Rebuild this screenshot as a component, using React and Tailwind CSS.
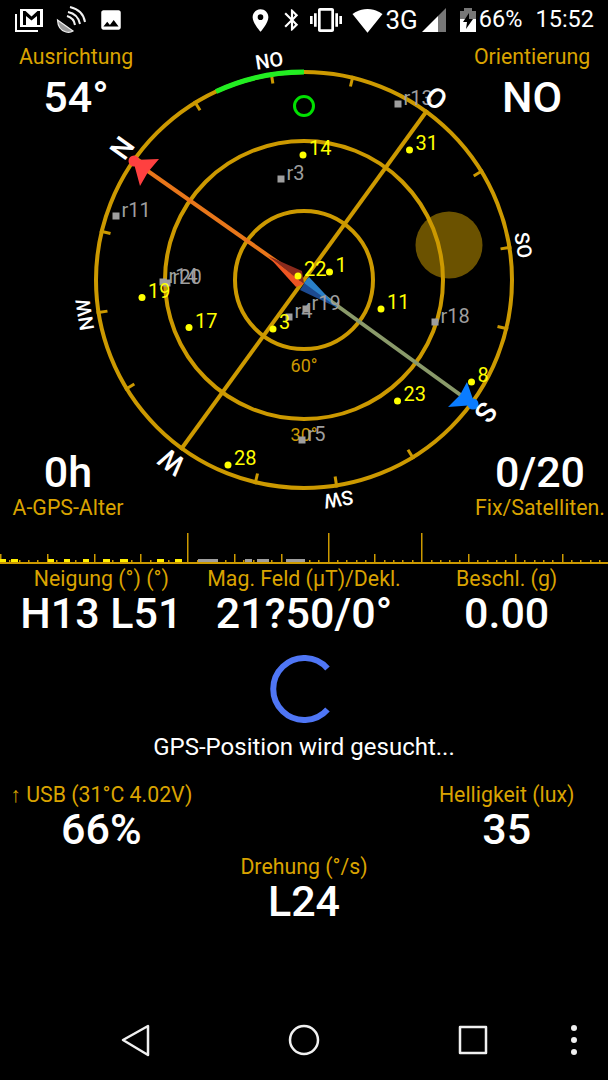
import React from 'react';
import { MdLocationOn, MdBluetooth, MdVibration, MdImage, MdSignalWifi4Bar } from 'react-icons/md';

const CX = 304;
const CY = 280;
const GOLD = '#cc9900';

const directions = [
  ['N', -54], ['NO', -9], ['O', 36], ['SO', 81],
  ['S', 126], ['SW', 171], ['W', 216], ['NW', 261],
];

// sichtbare Satelliten: [x, y, nummer]
const sats = [
  [303, 155, '14'], [409.5, 150, '31'], [298, 276, '22'], [329.5, 272, '1'],
  [381, 309, '11'], [273, 329, '3'], [142, 297.5, '19'], [189, 327.5, '17'],
  [397.5, 401, '23'], [471.5, 382, '8'], [228, 465, '28'],
];

const refSats = [
  [398, 104, 'r13'], [281, 179, 'r3'], [116, 216, 'r11'], [163, 282, 'r14'],
  [167, 283, 'r20'], [289, 317, 'r4'], [306, 309, 'r19'], [435, 322, 'r18'], [302, 440, 'r5'],
];

const yellowBars = [[0, 6], [11, 18], [48, 54], [64, 70], [83, 89], [103, 110], [120, 128], [157, 164], [175, 182]];
const grayBars = [[198, 218], [245, 252], [257, 269], [286, 305]];

const Compass = () => {
  const ticks = [];
  for (let i = 0; i < 16; i++) ticks.push(-54 + i * 22.5);

  return (
    <svg className="absolute inset-0" width="608" height="480" viewBox="0 40 608 480">
      <circle cx="449" cy="245" r="33.5" fill="#6b5200" />
      <circle cx={CX} cy={CY} r="208" fill="none" stroke={GOLD} strokeWidth="4" />
      <circle cx={CX} cy={CY} r="139" fill="none" stroke={GOLD} strokeWidth="4" />
      <circle cx={CX} cy={CY} r="69" fill="none" stroke={GOLD} strokeWidth="4" />
      {ticks.map((a) => (
        <line key={a} x1={CX} y1={CY - 210} x2={CX} y2={CY - 199} stroke={GOLD} strokeWidth="3" transform={`rotate(${a} ${CX} ${CY})`} />
      ))}
      <line x1="426" y1="112" x2="182" y2="448" stroke={GOLD} strokeWidth="4" />
      <path d="M216.1 91.5 A208 208 0 0 1 304 72" fill="none" stroke="#22ee22" strokeWidth="5" />
      <circle cx="304" cy="106" r="9.5" fill="none" stroke="#00e000" strokeWidth="3" />

      <text x="304" y="372" textAnchor="middle" fontSize="18" fill={GOLD}>60°</text>
      <text x="304" y="441" textAnchor="middle" fontSize="18" fill={GOLD}>30°</text>

      {/* Nadel */}
      <line x1="135" y1="162" x2="300" y2="278" stroke="#e8761a" strokeWidth="4" />
      <line x1="310" y1="286" x2="473" y2="404" stroke="#8a9a6a" strokeWidth="4" />
      <polygon points="268,256 302,271 304,284" fill="#8a2a1c" />
      <polygon points="268,256 304,284 296,287" fill="#ee5522" />
      <polygon points="338,308 308,278 300,290" fill="#1c4a90" />
      <polygon points="338,308 309,277 304,283" fill="#2a80c8" />
      <polygon points="133,160 159,159 148,172 140,186" fill="#ff4040" />
      <circle cx="134" cy="161" r="5.5" fill="#ff4040" />
      <polygon points="475,405 448,407 460,395 467,382" fill="#0a7cff" />
      <circle cx="473" cy="404" r="5.5" fill="#0a7cff" />

      {refSats.map(([x, y, n]) => (
        <g key={n}>
          <rect x={x - 3.5} y={y - 3.5} width="7" height="7" fill="#9e9e9e" />
          <text x={x + 5.5} y={y + 1} fontSize="20" fill="#9e9e9e">{n}</text>
        </g>
      ))}
      {sats.map(([x, y, n]) => (
        <g key={n}>
          <circle cx={x} cy={y} r="3.5" fill="#ffff00" />
          <text x={x + 6} y={y} fontSize="20" fill="#ffff00">{n}</text>
        </g>
      ))}
      {directions.map(([label, a]) => (
        <text
          key={label}
          x={CX}
          y={CY - 215}
          textAnchor="middle"
          fontSize={label.length === 1 ? 28 : 20}
          fontWeight="500"
          fill="#ffffff"
          transform={`rotate(${a} ${CX} ${CY})`}
        >
          {label}
        </text>
      ))}
    </svg>
  );
};

const BarChart = () => {
  const lines = [];
  for (let i = 0; i < 65; i++) {
    const x = Math.round(i * 9.36);
    let h = 3;
    if (i % 5 === 0) h = 9;
    if (i === 20 || i === 35 || i === 45) h = 30;
    lines.push(<rect key={i} x={x} y={43 - h} width="1.5" height={h} fill={GOLD} />);
  }
  return (
    <svg width="608" height="45" viewBox="0 0 608 45" className="block">
      {lines}
      {yellowBars.map(([a, b]) => <rect key={a} x={a} y="39" width={b - a} height="4" fill="#ffee00" />)}
      {grayBars.map(([a, b]) => <rect key={a} x={a} y="39" width={b - a} height="4" fill="#9e9e9e" />)}
      <rect x="0" y="42" width="608" height="2" fill={GOLD} />
    </svg>
  );
};

const Metric = ({ label, value, gap = 'mt-0', className = '' }) => (
  <div className={`flex flex-col items-center ${className}`}>
    <div className="text-[21.3px] leading-[24px] text-[#d9a300] whitespace-nowrap">{label}</div>
    <div className={`text-[43px] leading-[44px] font-medium text-white whitespace-nowrap ${gap}`}>{value}</div>
  </div>
);

const StatusBar = () => (
  <div className="h-[40px] flex items-center justify-between pl-[15px] pr-[14px] text-white">
    <div className="flex items-center">
      <svg width="30" height="26" viewBox="0 0 30 26" fill="none">
        <path d="M1 7v17h22" stroke="#fff" strokeWidth="2" />
        <rect x="5" y="2" width="23" height="18" fill="#fff" />
        <path d="M8 4v14h3V9l5.5 4.5L22 9v9h3V4h-2.5L16.5 9.500 10.5 4z" fill="#000" />
      </svg>
      <svg className="ml-[11px]" width="30" height="28" viewBox="0 0 30 28" fill="none">
        <path d="M1.5 14Q2 24 10 26Q14 27 17 25Z" fill="#999" stroke="#eee" strokeWidth="1.2" />
        <path d="M11 10Q18 12 19 19M12 6Q22 8 24 18M14 1Q27 4 29 16" stroke="#f2f2f2" strokeWidth="2" />
      </svg>
      <MdImage className="ml-[12px]" size={26} />
    </div>
    <div className="flex items-center">
      <MdLocationOn size={27} />
      <MdBluetooth className="ml-[5px]" size={26} />
      <MdVibration className="ml-[5px]" size={32} />
      <MdSignalWifi4Bar className="ml-[10px]" size={31} />
      <span className="ml-[3px] text-[26px] leading-none">3G</span>
      <svg className="ml-[4px]" width="24" height="24" viewBox="0 0 24 24">
        <polygon points="0,24 16,8 16,24" fill="#fff" />
        <polygon points="16,8 24,0 24,24 16,24" fill="#777" />
      </svg>
      <svg className="ml-[14px]" width="16" height="24" viewBox="0 0 16 24">
        <path d="M4 0h8v3h4v8H0V3h4z" fill="#777" />
        <path d="M0 11h16v13H0z" fill="#fff" />
        <path d="M9 5 3 14h4l-1 7 7-10H9z" fill="#000" />
      </svg>
      <span className="ml-[3px] text-[23.5px] leading-none">66%</span>
      <span className="ml-[13px] text-[23.5px] leading-none">15:52</span>
    </div>
  </div>
);

const NavBar = () => (
  <div className="relative mt-auto h-[80px] flex items-start justify-center gap-[135px] pt-[24px]">
    <svg width="34" height="34" viewBox="0 0 34 34" fill="none" stroke="#f0f0f0" strokeWidth="2.5" strokeLinejoin="round">
      <polygon points="5,16 30,2 30,31" />
    </svg>
    <svg width="34" height="34" viewBox="0 0 34 34" fill="none" stroke="#f0f0f0" strokeWidth="2.5">
      <circle cx="17" cy="16" r="14" />
    </svg>
    <svg width="34" height="34" viewBox="0 0 34 34" fill="none" stroke="#f0f0f0" strokeWidth="2.5" strokeLinejoin="round">
      <rect x="4" y="3" width="26" height="26" />
    </svg>
    <svg className="absolute left-[570px] top-[24px]" width="8" height="32" viewBox="0 0 8 32" fill="#f0f0f0">
      <circle cx="4" cy="4" r="3" />
      <circle cx="4" cy="16" r="3" />
      <circle cx="4" cy="28" r="3" />
    </svg>
  </div>
);

export default function App() {
  return (
    <div className="w-[608px] h-[1080px] bg-black flex flex-col overflow-hidden" style={{ fontFamily: 'Roboto, sans-serif' }}>
      <StatusBar />
      <div className="relative h-[480px] flex flex-col justify-between pt-[5px]">
        <Compass />
        <div className="relative flex justify-between">
          <Metric label="Ausrichtung" value="54°" gap="mt-[6px]" className="w-[152px]" />
          <Metric label="Orientierung" value="NO" gap="mt-[6px]" className="w-[152px]" />
        </div>
        <div className="relative flex justify-between">
          <div className="flex flex-col items-center w-[136px]">
            <div className="text-[43px] leading-[44px] font-medium text-white">0h</div>
            <div className="text-[21.3px] leading-[24px] text-[#d9a300] mt-[2px]">A-GPS-Alter</div>
          </div>
          <div className="flex flex-col items-center w-[136px]">
            <div className="text-[43px] leading-[44px] font-medium text-white">0/20</div>
            <div className="text-[21.3px] leading-[24px] text-[#d9a300] mt-[2px] whitespace-nowrap">Fix/Satelliten.</div>
          </div>
        </div>
      </div>
      <BarChart />
      <div className="grid grid-cols-3 mt-[2px]">
        <Metric label="Neigung (°) (°)" value="H13 L51" />
        <Metric label="Mag. Feld (µT)/Dekl." value="21?50/0°" />
        <Metric label="Beschl. (g)" value="0.00" />
      </div>
      <div className="flex flex-col items-center mt-[20px]">
        <svg className="-ml-[2px]" width="68" height="68" viewBox="0 0 68 68" fill="none">
          <path d="M58.5 13.5 A31 31 0 1 0 58.5 54.5" stroke="#4f76f5" strokeWidth="6" />
        </svg>
        <div className="text-[24px] leading-[28px] text-white mt-[10px]">GPS-Position wird gesucht...</div>
      </div>
      <div className="grid grid-cols-3 mt-[22px]">
        <Metric label="↑ USB (31°C 4.02V)" value="66%" />
        <div />
        <Metric label="Helligkeit (lux)" value="35" />
      </div>
      <div className="flex justify-center mt-[4px]">
        <Metric label="Drehung (°/s)" value="L24" />
      </div>
      <NavBar />
    </div>
  );
}
